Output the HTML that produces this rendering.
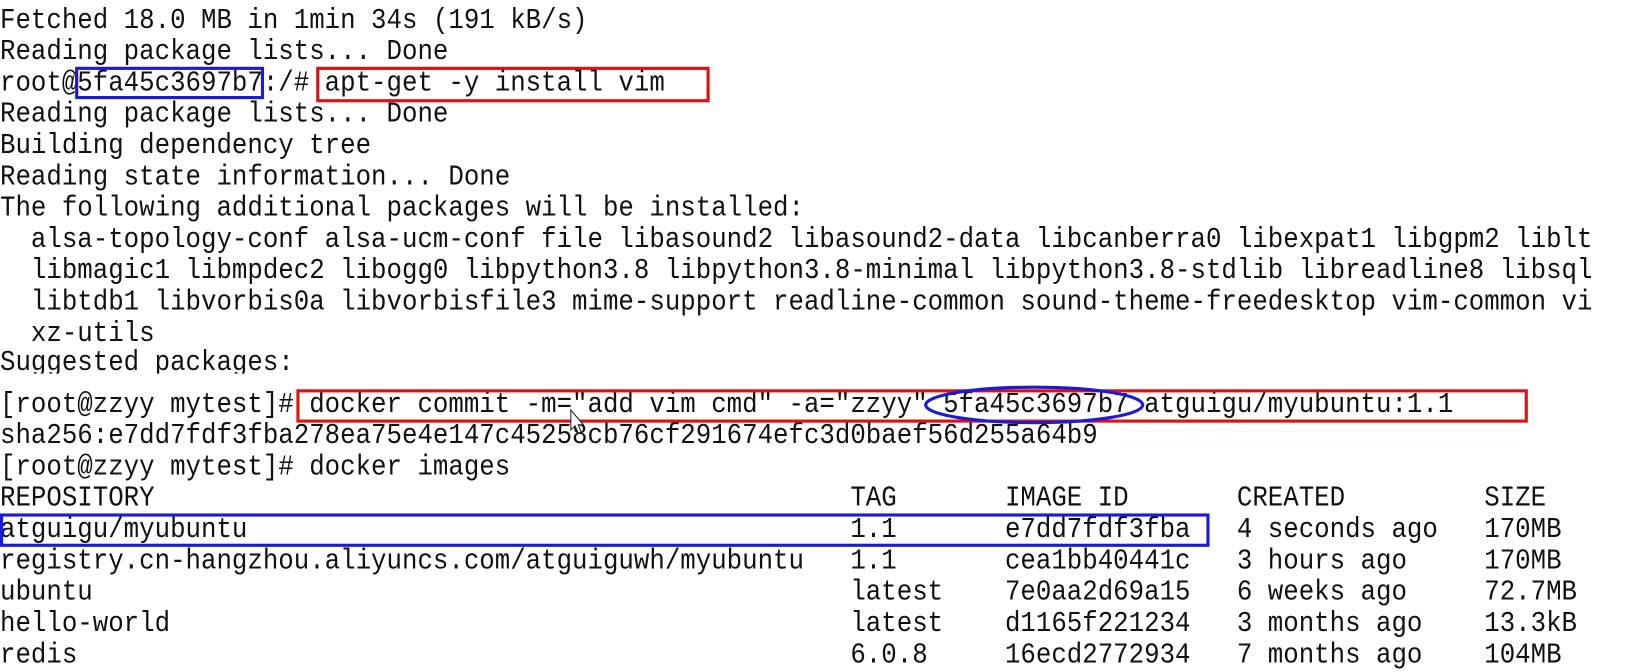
<!DOCTYPE html>
<html><head><meta charset="utf-8"><style>
html,body{margin:0;padding:0;background:#fff;width:1628px;height:672px;overflow:hidden;position:relative}
#w{position:absolute;left:0;top:0;width:1560px;height:644px;transform:scale(1.0436);transform-origin:0 0}
.l{position:absolute;left:0;white-space:pre;font-family:"Liberation Mono","DejaVu Sans Mono",monospace;font-size:24.7px;line-height:30px;height:30px;color:#111;transform:scaleY(1.1);transform-origin:0 50%}
.b{position:absolute;border:3px solid #1a1ad8;box-sizing:border-box}
.r{position:absolute;border:3px solid #e01010;box-sizing:border-box}
</style></head><body><div id="w">
<div class="l" style="top:5px">Fetched 18.0 MB in 1min 34s (191 kB/s)</div>
<div class="l" style="top:35px">Reading package lists... Done</div>
<div class="l" style="top:65px">root@5fa45c3697b7:/# apt-get -y install vim</div>
<div class="l" style="top:95px">Reading package lists... Done</div>
<div class="l" style="top:125px">Building dependency tree</div>
<div class="l" style="top:155px">Reading state information... Done</div>
<div class="l" style="top:185px">The following additional packages will be installed:</div>
<div class="l" style="top:215px">  alsa-topology-conf alsa-ucm-conf file libasound2 libasound2-data libcanberra0 libexpat1 libgpm2 liblt</div>
<div class="l" style="top:245px">  libmagic1 libmpdec2 libogg0 libpython3.8 libpython3.8-minimal libpython3.8-stdlib libreadline8 libsql</div>
<div class="l" style="top:275px">  libtdb1 libvorbis0a libvorbisfile3 mime-support readline-common sound-theme-freedesktop vim-common vi</div>
<div class="l" style="top:305px">  xz-utils</div>
<div style="position:absolute;left:0;top:330px;width:1560px;height:28px;overflow:hidden"><div class="l" style="top:3px">Suggested packages:</div></div>
<div class="l" style="top:373px">[root@zzyy mytest]# docker commit -m="add vim cmd" -a="zzyy" 5fa45c3697b7 atguigu/myubuntu:1.1</div>
<div class="l" style="top:403px">sha256:e7dd7fdf3fba278ea75e4e147c45258cb76cf291674efc3d0baef56d255a64b9</div>
<div class="l" style="top:433px">[root@zzyy mytest]# docker images</div>
<div class="l" style="top:463px">REPOSITORY                                             TAG       IMAGE ID       CREATED         SIZE</div>
<div class="l" style="top:493px">atguigu/myubuntu                                       1.1       e7dd7fdf3fba   4 seconds ago   170MB</div>
<div class="l" style="top:523px">registry.cn-hangzhou.aliyuncs.com/atguiguwh/myubuntu   1.1       cea1bb40441c   3 hours ago     170MB</div>
<div class="l" style="top:553px">ubuntu                                                 latest    7e0aa2d69a15   6 weeks ago     72.7MB</div>
<div class="l" style="top:583px">hello-world                                            latest    d1165f221234   3 months ago    13.3kB</div>
<div class="l" style="top:613px">redis                                                  6.0.8     16ecd2772934   7 months ago    104MB</div>
<div class="b" style="left:72px;top:64px;width:181px;height:31px"></div>
<div class="r" style="left:303px;top:64px;width:377px;height:34px"></div>
<div class="r" style="left:284px;top:373px;width:1180px;height:32px"></div>
<div class="b" style="left:0;top:492px;width:1159px;height:32px"></div>
<svg style="position:absolute;left:0;top:0" width="1560" height="644">
<ellipse cx="991" cy="388" rx="104" ry="17" fill="none" stroke="#1a1ad8" stroke-width="3"/>
<path d="M547 393 L547 412 L551 408 L554 415 L557 414 L554 407 L559 407 Z" fill="#fff" stroke="#222" stroke-width="1"/>
</svg>
</div></body></html>
